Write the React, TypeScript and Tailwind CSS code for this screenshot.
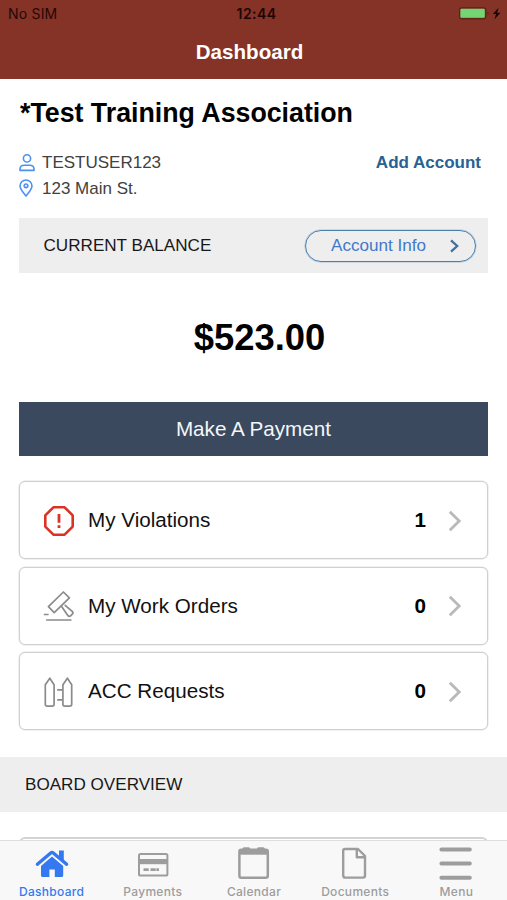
import type { ReactNode } from "react";

function StatusBar() {
  return (
    <div className="grid h-[27px] grid-cols-3 items-center pl-2 pr-1 font-[Inter,sans-serif] text-[14px] leading-none text-[#240806]">
      <span className="tracking-[0.2px]">No SIM</span>
      <span className="pl-[2px] text-center font-semibold tracking-[0.4px] text-[#1c0504]">12:44</span>
      <svg className="justify-self-end" width="44" height="15" viewBox="0 0 44 15">
        <rect x="0.4" y="1.8" width="26.4" height="11" rx="2.4" fill="none" stroke="#5a2218" strokeWidth="1.2" />
        <rect x="1.4" y="2.8" width="24.4" height="9" rx="1" fill="#73d673" />
        <path d="M28.6 5.8c1.3.4 1.3 3 0 3.4z" fill="#4d1d14" />
        <path d="M39.6 1.8 33.8 8h3.2l-1.6 5.4 6-6.6h-3.3z" fill="#1c0504" />
      </svg>
    </div>
  );
}

function Chevron() {
  return (
    <svg width="14" height="22" viewBox="0 0 14 22" fill="none" stroke="#b9b9b9" strokeWidth="2.8">
      <path d="M1.8 1.8 11.2 11 1.8 20.2" />
    </svg>
  );
}

function ViolationIcon() {
  return (
    <svg width="32" height="32" viewBox="0 0 32 32" fill="none" stroke="#dc3226" strokeWidth="2.6">
      <path d="M10.4 2.3h11.2l8.1 8.1v11.2l-8.1 8.1H10.4l-8.1-8.1V10.4z" strokeLinejoin="round" />
      <path d="M16 9v8.8M16 20.2v2.8" strokeWidth="2.8" />
    </svg>
  );
}

function GavelIcon() {
  return (
    <svg width="32" height="32" viewBox="0 0 32 32" fill="none" stroke="#8b8b8b" strokeWidth="1.7" strokeLinejoin="round" strokeLinecap="round">
      <path d="M20.4 2 26.4 7.8 11.2 22.6 5.4 16.7z" />
      <path d="M18.8 16.8 24.8 25.4Q26.2 27 27.8 25.6L29.3 24.1Q30.6 22.8 29.2 21.3L22.2 15.3" />
      <path d="M1.5 24.5h3.4M3.8 30h24" />
    </svg>
  );
}

function FenceIcon() {
  return (
    <svg width="32" height="32" viewBox="0 0 32 32" fill="none" stroke="#8b8b8b" strokeWidth="1.7" strokeLinejoin="round">
      <path d="M6.8 2.2 11.1 8.8V28.3Q11.1 30.2 9.2 30.2H4.2Q2.3 30.2 2.3 28.3V8.8z" />
      <path d="M24.4 2.2 28.7 8.8V28.3Q28.7 30.2 26.8 30.2H21.8Q19.9 30.2 19.9 28.3V8.8z" />
      <path d="M14.2 13.9h5.5M14.2 23.8h5.5" />
    </svg>
  );
}

function Row({ icon, label, count }: { icon: ReactNode; label: string; count: number }) {
  return (
    <button className="flex h-[78px] w-full items-center rounded-[6px] border border-[#d0d0d0] bg-white pl-[23px] pr-[25px] pt-px text-left text-[20.65px] text-[#111] shadow-[0_0_0_0.5px_#e4e4e4]">
      {icon}
      <span className="ml-[13px] flex-1">{label}</span>
      <span className="mr-[22px] font-bold text-black">{count}</span>
      <Chevron />
    </button>
  );
}

function Tab({ icon, label, active = false }: { icon: ReactNode; label: string; active?: boolean }) {
  return (
    <button className={`flex flex-1 flex-col items-center pt-[5px] ${active ? "text-[#3478f2]" : "text-[#9d9d9d]"}`}>
      {icon}
      <span className="mt-1 text-[12px] font-medium leading-[15px] tracking-[0.3px]">{label}</span>
    </button>
  );
}

export default function App() {
  return (
    <div className="flex h-[900px] w-[507px] flex-col overflow-hidden bg-white font-['Liberation_Sans',Arial,sans-serif]">
      <header className="h-[79px] shrink-0 bg-[#863327]">
        <StatusBar />
        <h1 className="pt-[9px] pr-2 text-center text-[20.6px] font-bold leading-[32px] text-white">Dashboard</h1>
      </header>

      <main className="min-h-0 flex-1 overflow-hidden">
        <section className="px-[19px] pt-[18px]">
          <h2 className="whitespace-nowrap pl-px text-[26.75px] font-bold leading-[32px] text-black">*Test Training Association</h2>
          <div className="mt-[21px] flex justify-between pr-[7px] text-[17px] leading-[25.5px]">
            <div className="text-[#414141]">
              <div className="flex items-center">
                <svg className="mr-[7px]" width="16" height="18" viewBox="0 0 16 18" fill="none" stroke="#4d91ee" strokeWidth="1.6">
                  <circle cx="8" cy="4.4" r="3.6" />
                  <path d="M1 16.4v-1.2c0-2.7 1.8-4 4.2-4h5.6c2.4 0 4.2 1.3 4.2 4v1.2z" strokeLinejoin="round" />
                </svg>
                TESTUSER123
              </div>
              <div className="flex items-center">
                <svg className="mr-[9px]" width="14" height="18" viewBox="0 0 14 18" fill="none" stroke="#4d91ee" strokeWidth="1.6">
                  <path d="M7 17C4.2 13.4 1 10.2 1 7a6 6 0 0 1 12 0c0 3.2-3.2 6.4-6 10z" strokeLinejoin="round" />
                  <circle cx="7" cy="6.8" r="1.8" />
                </svg>
                123 Main St.
              </div>
            </div>
            <button className="h-[26px] self-start font-bold text-[#276294]">Add Account</button>
          </div>

          <div className="mt-[17px] flex h-[55px] items-center justify-between bg-[#eeeeee] pl-[24.5px] pr-3 text-[17.1px] text-[#181818]">
            <span>CURRENT BALANCE</span>
            <button className="flex h-8 w-[171px] items-center justify-between rounded-full border border-[#4a7fae] pl-[25px] pr-[15px] text-[#4279ca] shadow-[0_0_0_0.5px_#a9c2d8]">
              Account Info
              <svg width="11" height="14" viewBox="0 0 11 14" fill="none" stroke="#41719b" strokeWidth="2.3">
                <path d="m2 1.3 6.2 5.7L2 12.7" />
              </svg>
            </button>
          </div>

          <p className="mt-[44px] pl-[12px] text-center text-[36.4px] font-bold leading-[42px] text-black">$523.00</p>

          <button className="mt-[43px] h-[54px] w-full bg-[#3a495e] text-[20.7px] text-[#f4f7fa]">Make A Payment</button>

          <div className="mt-[25px] flex flex-col gap-[7.5px]">
            <Row icon={<ViolationIcon />} label="My Violations" count={1} />
            <Row icon={<GavelIcon />} label="My Work Orders" count={0} />
            <Row icon={<FenceIcon />} label="ACC Requests" count={0} />
          </div>
        </section>

        <h3 className="mt-[27px] flex h-[55px] items-center bg-[#eeeeee] pl-[25px] text-[17.1px] text-[#181818]">BOARD OVERVIEW</h3>
        <div className="mx-[19px] mt-[25px] h-[78px] rounded-[6px] border-2 border-[#d3d3d3]" />
      </main>

      <nav className="flex h-[60px] shrink-0 border-t border-[#dedede] bg-[#f8f8f8] pl-px font-[Inter,sans-serif]">
        <Tab
          active
          label="Dashboard"
          icon={
            <svg width="34" height="34" viewBox="0 0 34 34" fill="currentColor">
              <path d="M17 10.6 28.2 20V29.4Q28.2 31 26.6 31H19.8V23.6H14.4V31H7.6Q6 31 6 29.4V20z" />
              <path d="M2.4 18.2 15.7 7Q17 6 18.3 7L31.6 18.2" fill="none" stroke="#f8f8f8" strokeWidth="5.8" />
              <path d="M2.4 18.2 15.7 7Q17 6 18.3 7L31.6 18.2" fill="none" stroke="currentColor" strokeWidth="3.4" strokeLinecap="round" strokeLinejoin="round" />
              <path d="M24 4.4h4.8v10.8l-4.8-4z" />
            </svg>
          }
        />
        <Tab
          label="Payments"
          icon={
            <svg width="34" height="34" viewBox="0 0 34 34" fill="none" stroke="currentColor" strokeWidth="2">
              <rect x="3" y="8" width="28.4" height="21.6" rx="1.6" />
              <path d="M3 15.6h28" strokeWidth="5.2" />
              <path d="M7.5 23.6h5.2M14.5 23.6h8.5" strokeWidth="2.6" strokeDasharray="5.2 0.6" />
            </svg>
          }
        />
        <Tab
          label="Calendar"
          icon={
            <svg width="34" height="34" viewBox="0 0 34 34" fill="none" stroke="currentColor" strokeWidth="2.5">
              <rect x="2.4" y="3.8" width="28.4" height="28" rx="2" />
              <path d="M2.4 6.2h28.4" strokeWidth="5" />
              <path d="M7.1 3h4.5M21.6 3h4.5" strokeWidth="3.4" strokeLinecap="round" />
            </svg>
          }
        />
        <Tab
          label="Documents"
          icon={
            <svg width="34" height="34" viewBox="0 0 34 34" fill="none" stroke="currentColor" strokeWidth="2.4" strokeLinejoin="round">
              <path d="M7 3H20L27 10V29.6Q27 31.6 25 31.6H7.2Q5.2 31.6 5.2 29.6V4.6Q5.2 3 7 3z" />
              <path d="M18.8 3.4V11.2H27" />
            </svg>
          }
        />
        <Tab
          label="Menu"
          icon={
            <svg width="34" height="34" viewBox="0 0 34 34" stroke="currentColor" strokeWidth="4" strokeLinecap="round">
              <path d="M2.4 3.5h28.4M2.4 17.6h28.4M2.4 31.7h28.4" />
            </svg>
          }
        />
      </nav>
    </div>
  );
}
